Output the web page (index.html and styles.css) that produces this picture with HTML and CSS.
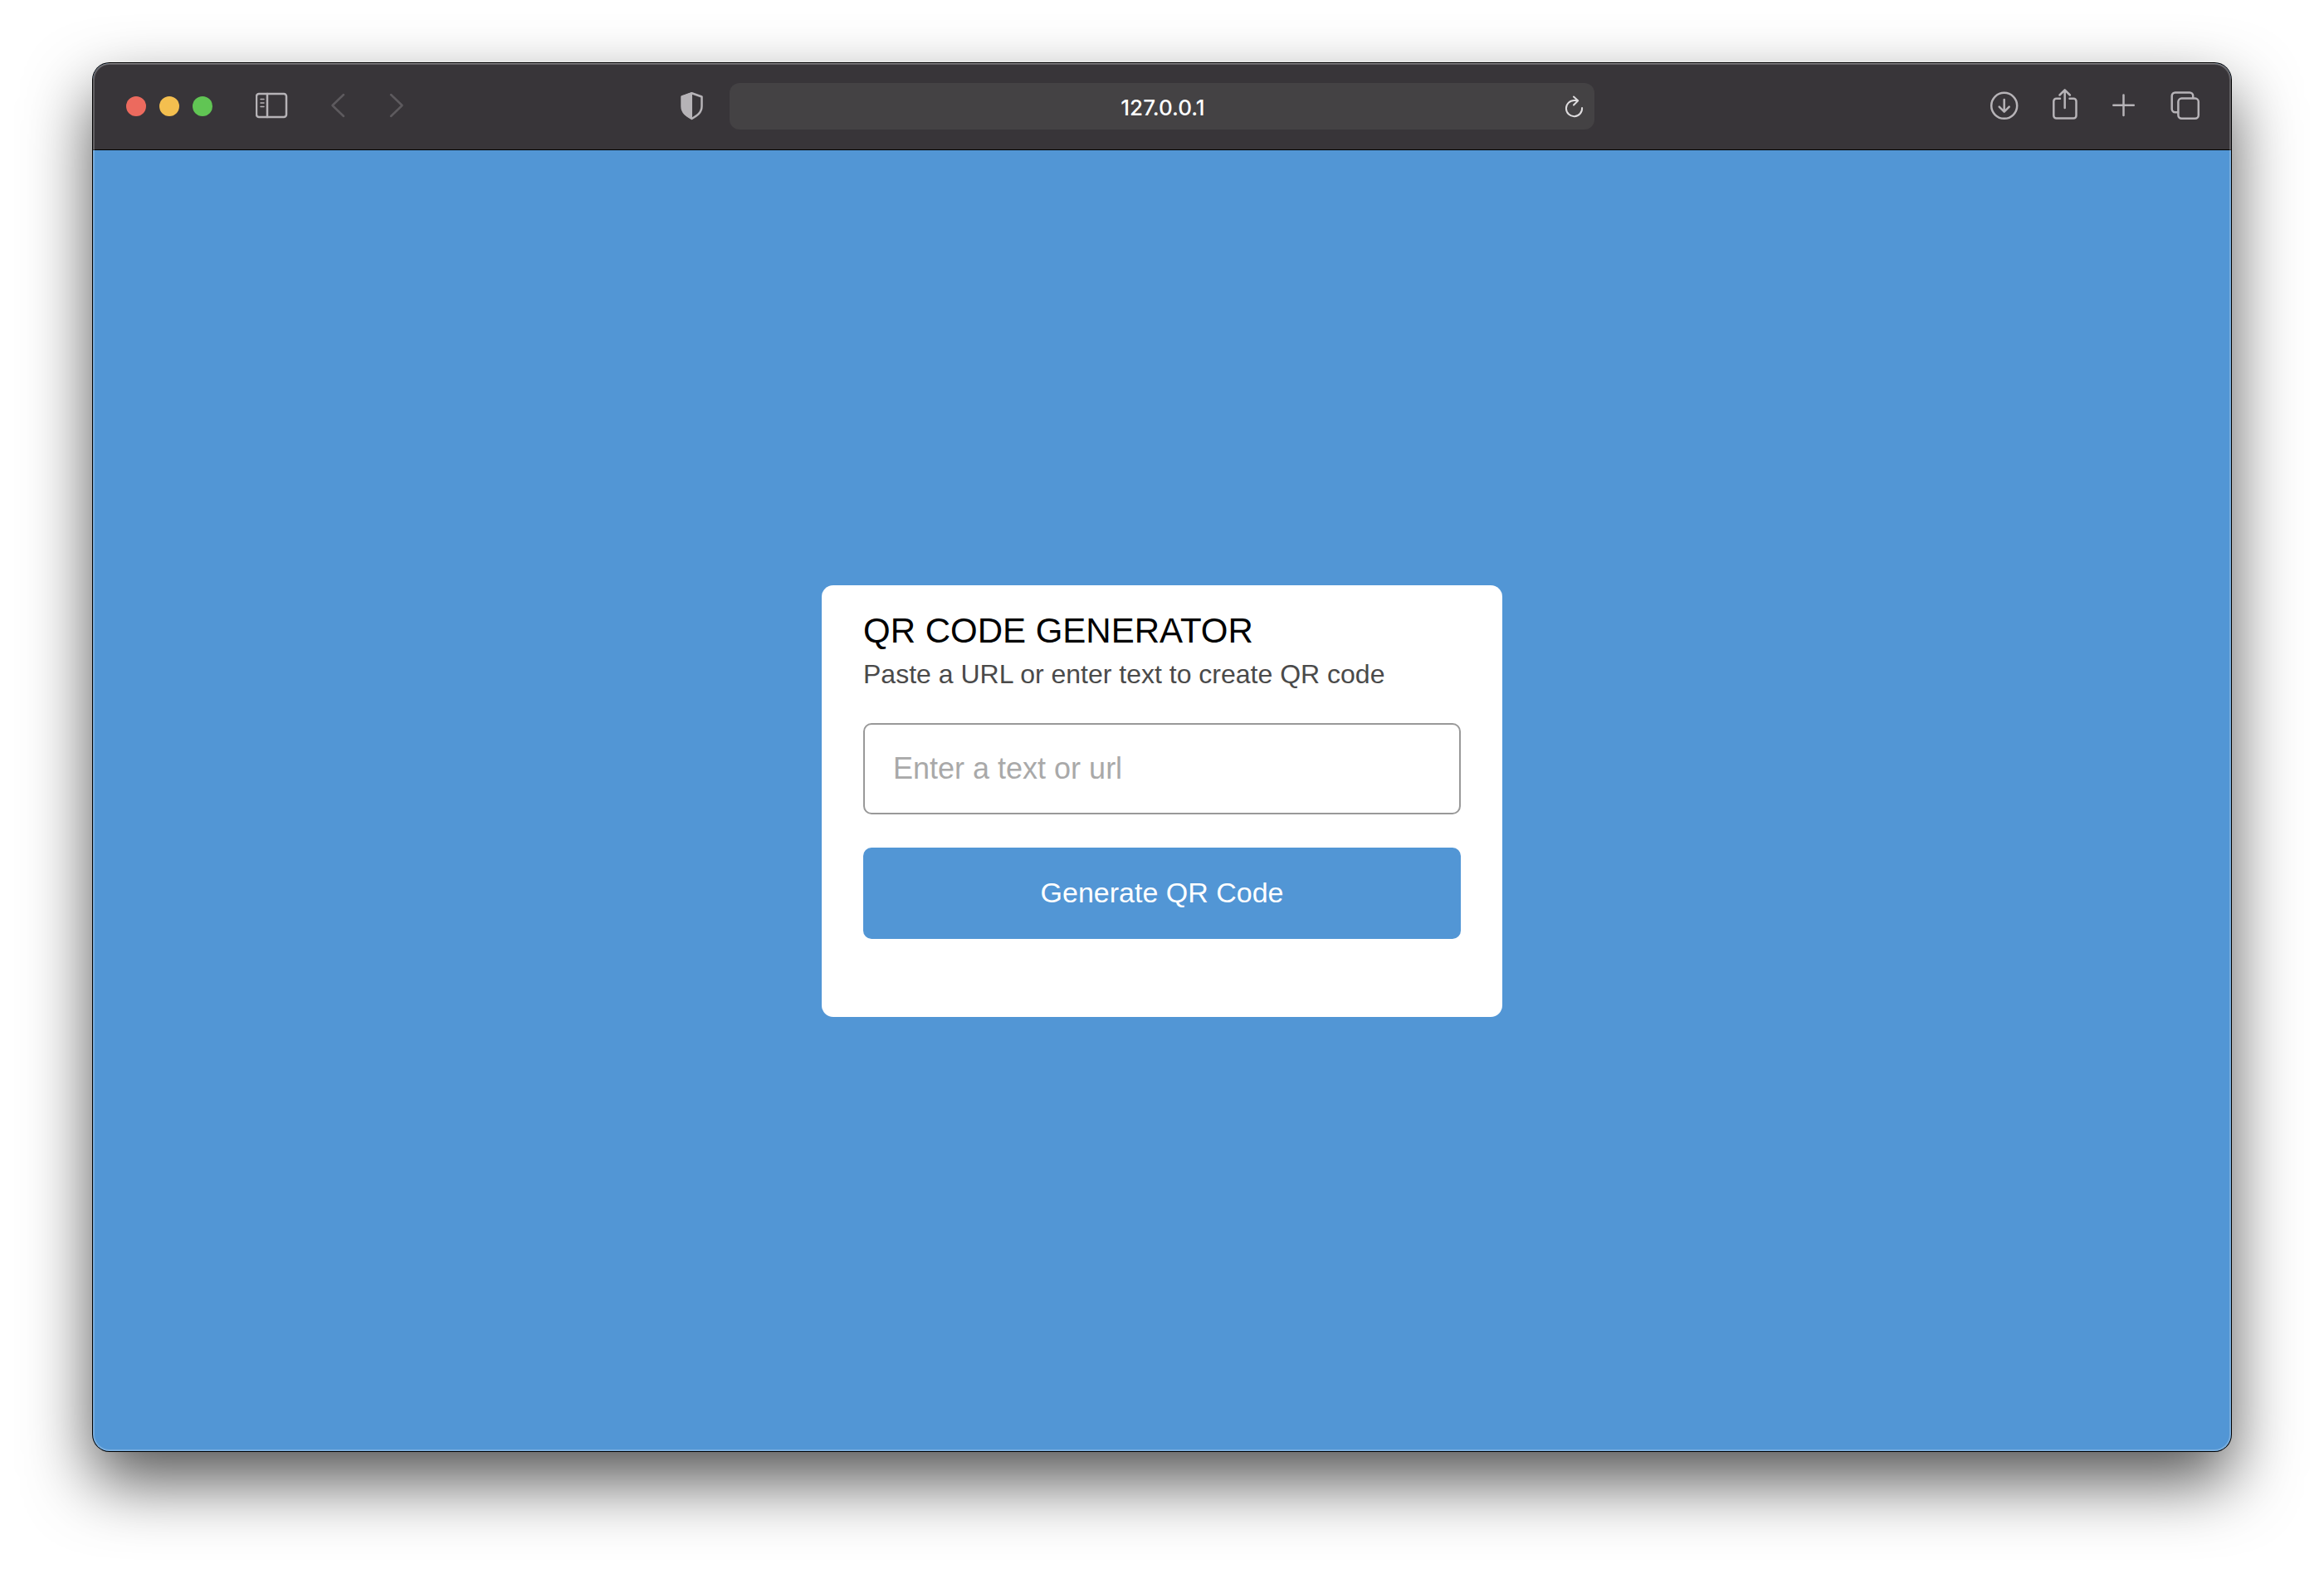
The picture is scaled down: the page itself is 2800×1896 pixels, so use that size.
FILE: index.html
```html
<!DOCTYPE html>
<html lang="en">
<head>
<meta charset="utf-8">
<meta name="viewport" content="width=device-width, initial-scale=1">
<title>QR Code Generator</title>
<link rel="stylesheet" href="styles.css">
</head>
<body>
<div class="window">
  <header class="toolbar">
    <div class="toolbar-side">
      <div class="lights">
        <button class="light light-close" aria-label="Close"></button>
        <button class="light light-minimize" aria-label="Minimize"></button>
        <button class="light light-zoom" aria-label="Zoom"></button>
      </div>
      <button class="tool" aria-label="Show sidebar">
        <svg width="40" height="44" viewBox="0 0 40 44"><rect x="1" y="7" width="36" height="28" rx="3"/><path d="M14 7v28"/><path class="thin" d="M6 13.500h4M6 18h4M6 22.500h4"/></svg>
      </button>
      <div class="history">
        <button class="tool tool-off" aria-label="Back">
          <svg width="40" height="44" viewBox="0 0 40 44"><path d="M26 8 12.500 21 26 34"/></svg>
        </button>
        <button class="tool tool-off" aria-label="Forward">
          <svg width="40" height="44" viewBox="0 0 40 44"><path d="M15 8 28.500 21 15 34"/></svg>
        </button>
      </div>
      <button class="tool tool-privacy" aria-label="Privacy report">
        <svg width="28" height="44" viewBox="0 0 28 44"><path d="M14.500 6.200 26.500 10.500V22c0 8-6 11.500-12 15C8.500 33.500 2.500 30 2.500 22V10.500z"/><path class="solid" d="M15 5 2 9.800V22c0 8.500 6.500 12.500 13 16z"/></svg>
      </button>
    </div>
    <div class="address">
      <input class="address-input" type="text" value="127.0.0.1" aria-label="Address">
      <button class="reload" aria-label="Reload">
        <svg class="reload-icon" width="24" height="28" viewBox="0 0 24 28"><path d="M21.100 16A9.600 9.600 0 1 1 11.500 7H16M11 2.500 16.200 7.300 11 12.500"/></svg>
      </button>
    </div>
    <div class="toolbar-side toolbar-end">
      <button class="tool" aria-label="Downloads">
        <svg width="40" height="44" viewBox="0 0 40 44"><circle cx="18.700" cy="21.300" r="15.500"/><path d="M18.700 14v14M12.700 22.700l6 6 6-6"/></svg>
      </button>
      <button class="tool" aria-label="Share">
        <svg width="40" height="44" viewBox="0 0 40 44"><path d="M14 12.700H9.500a3.200 3.200 0 0 0-3.200 3.200v17.400a3.200 3.200 0 0 0 3.200 3.200h20.800a3.200 3.200 0 0 0 3.200-3.200V15.900a3.200 3.200 0 0 0-3.200-3.200H25.500"/><path d="M19.700 24V2.800M13.500 8.500l6.200-6.200 6.200 6.200"/></svg>
      </button>
      <button class="tool" aria-label="New tab">
        <svg width="40" height="44" viewBox="0 0 40 44"><path d="M18.500 8.500v24.500M6.300 20.700h24.500"/></svg>
      </button>
      <button class="tool" aria-label="Tab overview">
        <svg width="40" height="44" viewBox="0 0 40 44"><rect x="12.400" y="12.600" width="24.400" height="24.200" rx="4"/><path d="M12 29.200H8.700a4 4 0 0 1-4-4V9.500a4 4 0 0 1 4-4h17.500a4 4 0 0 1 4 4v2.500"/></svg>
      </button>
    </div>
  </header>
  <main class="page">
    <form class="card">
      <h1 class="card-title">QR CODE GENERATOR</h1>
      <label class="card-hint" for="qr-text">Paste a URL or enter text to create QR code</label>
      <input class="card-input" id="qr-text" type="text" placeholder="Enter a text or url">
      <button class="card-button" type="button">Generate QR Code</button>
    </form>
  </main>
</div>
</body>
</html>
```
FILE: styles.css
```css
* {
  box-sizing: border-box;
}

body {
  display: flex;
  min-height: 100vh;
  margin: 0;
  padding: 76px 112px 148px;
  background: #fff;
  font-family: "Liberation Sans", Helvetica, Arial, sans-serif;
}

button,
input {
  margin: 0;
  padding: 0;
  border: 0;
  background: none;
  font: inherit;
}

svg {
  display: block;
  fill: none;
  stroke: currentColor;
  stroke-width: 2.5;
  stroke-linecap: round;
  stroke-linejoin: round;
}

.thin {
  stroke-width: 1.5;
}

.solid {
  fill: currentColor;
  stroke: none;
}

/* Browser window */

.window {
  position: relative;
  display: flex;
  flex: 1;
  flex-direction: column;
  overflow: hidden;
  border-radius: 20px;
  background: #5296d5;
  box-shadow: 0 0 0 1px #000, 0 36px 80px rgba(0, 0, 0, 0.67);
}

.window::after {
  content: "";
  position: absolute;
  inset: 0;
  border-radius: inherit;
  box-shadow: inset 0 1px 0 rgba(255, 255, 255, 0.2), inset 0 0 0 2px rgba(255, 255, 255, 0.22);
  pointer-events: none;
}

.toolbar {
  display: grid;
  grid-template-columns: 1fr 1042px 1fr;
  align-items: center;
  height: 105px;
  border-bottom: 1px solid #000;
  background: #383539;
}

.toolbar-side {
  display: flex;
  align-items: center;
  padding: 0 32px 0 40px;
}

.toolbar-end {
  justify-content: flex-end;
  gap: 32px;
  padding: 0 36px;
}

.lights {
  display: flex;
  gap: 16px;
  margin-right: 52px;
}

.light {
  width: 24px;
  height: 24px;
  border-radius: 50%;
}

.light-close {
  background: #ec6a5e;
}

.light-minimize {
  background: #f4bf4f;
}

.light-zoom {
  background: #61c554;
}

.tool {
  color: #b6b3b7;
}

.tool-off {
  color: #5d5a5e;
}

.history {
  display: flex;
  gap: 28px;
  margin-left: 40px;
}

.tool-privacy {
  margin-left: auto;
}

.address {
  position: relative;
}

.address-input {
  display: block;
  width: 100%;
  height: 56px;
  padding: 2px 0 0 2px;
  border-radius: 12px;
  background: #444244;
  color: #fff;
  font-family: Inter, "Liberation Sans", sans-serif;
  font-size: 26px;
  font-weight: 500;
  text-align: center;
}

.reload {
  position: absolute;
  top: 14px;
  right: 12px;
  color: #dedcde;
}

.reload-icon {
  stroke-width: 2;
}

/* Page */

.page {
  display: flex;
  flex: 1;
  align-items: center;
  justify-content: center;
}

.card {
  display: flex;
  flex-direction: column;
  width: 820px;
  max-width: 100%;
  padding: 30px 50px 94px;
  border-radius: 14px;
  background: #fff;
}

.card-title {
  margin: 0 0 8px;
  color: #000;
  font-size: 42px;
  font-weight: 400;
  line-height: 50px;
}

.card-hint {
  margin-bottom: 40px;
  color: #4a4a4a;
  font-size: 32px;
  line-height: 38px;
}

.card-input,
.card-button {
  width: 100%;
  height: 110px;
  border-radius: 10px;
}

.card-input {
  margin-bottom: 40px;
  padding: 0 34px;
  border: 2px solid #999;
  font-size: 36px;
}

.card-input::placeholder {
  color: #a9a9a9;
  opacity: 1;
}

.card-button {
  background: #5296d5;
  color: #fff;
  font-size: 34px;
}
```
